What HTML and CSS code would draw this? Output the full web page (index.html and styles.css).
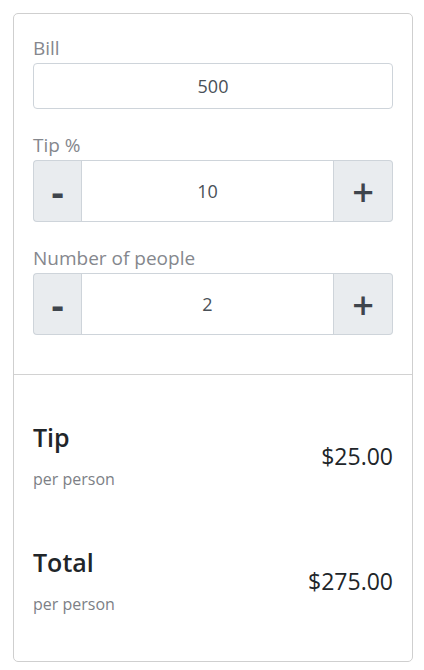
FILE: index.html
```html
<!DOCTYPE html>
<html lang="en">
<head>
<meta charset="utf-8">
<title>Tip calculator</title>
<link rel="stylesheet" href="styles.css">
</head>
<body>
<div class="card">
  <div class="form">
    <div class="field">
      <label class="label" for="bill">Bill</label>
      <input class="input" id="bill" type="text" value="500">
    </div>
    <div class="field">
      <label class="label" for="tip">Tip %</label>
      <div class="group">
        <button class="btn btn-minus" type="button">-</button>
        <input class="input input-mid" id="tip" type="text" value="10">
        <button class="btn btn-plus" type="button">+</button>
      </div>
    </div>
    <div class="field">
      <label class="label" for="people">Number of people</label>
      <div class="group">
        <button class="btn btn-minus" type="button">-</button>
        <input class="input input-mid" id="people" type="text" value="2">
        <button class="btn btn-plus" type="button">+</button>
      </div>
    </div>
  </div>
  <div class="results">
    <div class="row">
      <div class="row-left">
        <div class="row-title">Tip</div>
        <div class="row-sub">per person</div>
      </div>
      <div class="amount">$25.00</div>
    </div>
    <div class="row">
      <div class="row-left">
        <div class="row-title">Total</div>
        <div class="row-sub">per person</div>
      </div>
      <div class="amount amount-total">$275.00</div>
    </div>
  </div>
</div>
</body>
</html>
```
FILE: styles.css
```css
body {
  margin: 0;
  background: #fff;
  font-family: "Open Sans", "Noto Sans", sans-serif;
}

.card {
  margin: 13px 0 0 13px;
  width: 400px;
  height: 649px;
  box-sizing: border-box;
  border: 1px solid #cfcfcf;
  border-radius: 5px;
  display: flex;
  flex-direction: column;
}

.form {
  padding: 22px 19px 39px 19px;
  border-bottom: 1px solid #d2d2d2;
}

.field + .field {
  margin-top: 24px;
}

.label {
  display: block;
  font-size: 19px;
  line-height: 24px;
  color: #85878d;
  margin-bottom: 3px;
}

.input {
  display: block;
  width: 100%;
  height: 46px;
  box-sizing: border-box;
  border: 1px solid #ced4da;
  border-radius: 4px;
  background: #fff;
  font-family: inherit;
  font-size: 18px;
  color: #495057;
  text-align: center;
  padding: 0 12px;
  outline: none;
}

.group {
  display: flex;
  height: 62px;
}

.input-mid {
  flex: 1;
  width: auto;
  min-width: 0;
  height: 62px;
  border-radius: 0;
}

.btn {
  flex: none;
  height: 62px;
  box-sizing: border-box;
  border: 1px solid #ced4da;
  background: #e9ecef;
  color: #3f454d;
  font-family: inherit;
  font-weight: 700;
  line-height: 1;
  padding: 0;
  cursor: pointer;
}

.btn-minus {
  width: 48px;
  border-right: none;
  border-radius: 4px 0 0 4px;
  font-size: 38px;
}

.btn-plus {
  width: 59px;
  border-left: none;
  border-radius: 0 4px 4px 0;
  font-size: 38px;
  font-weight: 600;
}

.results {
  padding: 46px 19px 0 19px;
}

.row {
  display: flex;
  align-items: center;
  justify-content: space-between;
}

.row + .row {
  margin-top: 55px;
}

.row-title {
  font-size: 25px;
  line-height: 32px;
  font-weight: 600;
  color: #212529;
}

.row-sub {
  margin-top: 14px;
  font-size: 16px;
  line-height: 24px;
  color: #7d7f86;
}

.amount {
  font-size: 23px;
  line-height: 32px;
  color: #212529;
}

.amount-total {
  font-weight: 500;
}
```
